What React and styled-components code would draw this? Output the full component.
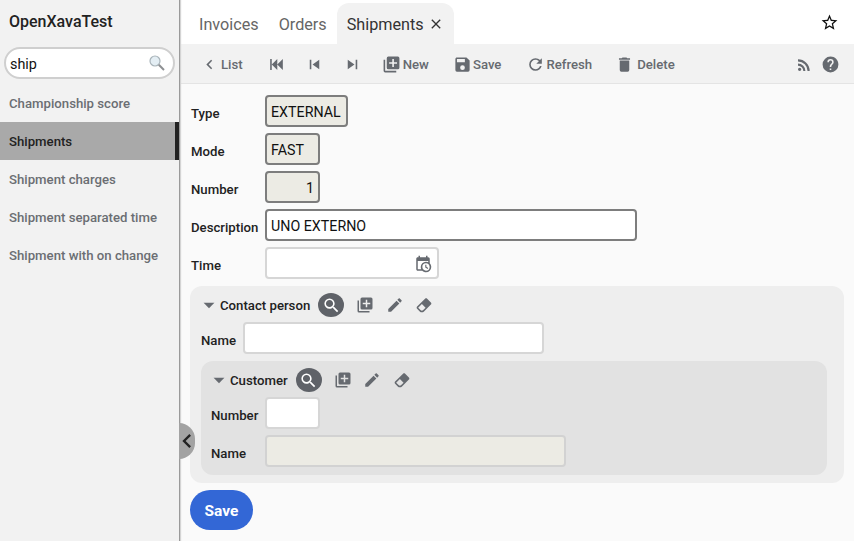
import styled, { createGlobalStyle } from 'styled-components';

const icons = {
  chevronLeft: 'M15.41,16.58L10.83,12L15.41,7.41L14,6L8,12L14,18L15.41,16.58Z',
  first: 'M20,5V19L13,12M6,5V19H4V5M13,5V19L6,12Z',
  prev: 'M6,18V6H8V18H6M9.5,12L18,6V18L9.5,12Z',
  next: 'M16,18H18V6H16M6,18L14.5,12L6,6V18Z',
  add: 'M19,11H15V15H13V11H9V9H13V5H15V9H19M20,2H8A2,2 0 0,0 6,4V16A2,2 0 0,0 8,18H20A2,2 0 0,0 22,16V4A2,2 0 0,0 20,2M4,6H2V20A2,2 0 0,0 4,22H18V20H4V6Z',
  save: 'M15,9H5V5H15M12,19A3,3 0 0,1 9,16A3,3 0 0,1 12,13A3,3 0 0,1 15,16A3,3 0 0,1 12,19M17,3H5C3.89,3 3,3.9 3,5V19A2,2 0 0,0 5,21H19A2,2 0 0,0 21,19V7L17,3Z',
  refresh: 'M17.65,6.35C16.2,4.9 14.21,4 12,4A8,8 0 0,0 4,12A8,8 0 0,0 12,20C15.73,20 18.84,17.45 19.73,14H17.65C16.83,16.33 14.61,18 12,18A6,6 0 0,1 6,12A6,6 0 0,1 12,6C13.66,6 15.14,6.69 16.22,7.78L13,11H20V4L17.65,6.35Z',
  trash: 'M19,4H15.5L14.5,3H9.5L8.5,4H5V6H19M6,19A2,2 0 0,0 8,21H16A2,2 0 0,0 18,19V7H6V19Z',
  rss: 'M6.18,15.64A2.18,2.18 0 0,1 8.36,17.82C8.36,19 7.38,20 6.18,20C5,20 4,19 4,17.82A2.18,2.18 0 0,1 6.18,15.64M4,4.44A15.56,15.56 0 0,1 19.56,20H16.73A12.73,12.73 0 0,0 4,7.27V4.44M4,10.1A9.9,9.9 0 0,1 13.9,20H11.07A7.07,7.07 0 0,0 4,12.93V10.1Z',
  help: 'M15.07,11.25L14.17,12.17C13.45,12.89 13,13.5 13,15H11V14.5C11,13.39 11.45,12.39 12.17,11.67L13.41,10.41C13.78,10.05 14,9.55 14,9C14,7.89 13.1,7 12,7A2,2 0 0,0 10,9H8A4,4 0 0,1 12,5A4,4 0 0,1 16,9C16,9.88 15.64,10.67 15.07,11.25M13,19H11V17H13M12,2A10,10 0 0,0 2,12A10,10 0 0,0 12,22A10,10 0 0,0 22,12C22,6.47 17.5,2 12,2Z',
  star: 'M12,15.39L8.24,17.66L9.23,13.38L5.91,10.5L10.29,10.13L12,6.09L13.71,10.13L18.09,10.5L14.77,13.38L15.76,17.66M22,9.24L14.81,8.63L12,2L9.19,8.62L2,9.24L7.45,13.97L5.82,21L12,17.27L18.18,21L16.54,13.97L22,9.24Z',
  magnify: 'M9.5,3A6.5,6.5 0 0,1 16,9.5C16,11.11 15.41,12.59 14.44,13.73L14.71,14H15.5L20.5,19L19,20.5L14,15.5V14.71L13.73,14.44C12.59,15.41 11.11,16 9.5,16A6.5,6.5 0 0,1 3,9.5A6.5,6.5 0 0,1 9.5,3M9.5,5C7,5 5,7 5,9.5C5,12 7,14 9.5,14C12,14 14,12 14,9.5C14,7 12,5 9.5,5Z',
  pencil: 'M20.71,7.04C21.1,6.65 21.1,6 20.71,5.63L18.37,3.29C18,2.9 17.35,2.9 16.96,3.29L15.12,5.12L18.87,8.87M3,17.25V21H6.75L17.81,9.93L14.06,6.18L3,17.25Z',
  eraser: 'M16.24,3.56L21.19,8.5C21.97,9.29 21.97,10.55 21.19,11.34L12,20.53C10.44,22.09 7.91,22.09 6.34,20.53L2.81,17C2.03,16.21 2.03,14.95 2.81,14.16L13.41,3.56C14.2,2.78 15.46,2.78 16.24,3.56M4.22,15.58L7.76,19.11C8.54,19.9 9.8,19.9 10.59,19.11L14.12,15.58L9.17,10.63L4.22,15.58Z',
  close: 'M19,6.41L17.59,5L12,10.59L6.41,5L5,6.41L10.59,12L5,17.59L6.41,19L12,13.41L17.59,19L19,17.59L13.41,12L19,6.41Z',
  menuDown: 'M7,10L12,15L17,10H7Z',
  calendarClock: 'M15,13H16.5V15.82L18.94,17.23L18.19,18.53L15,16.69V13M19,8H5V19H9.67C9.24,18.09 9,17.07 9,16A7,7 0 0,1 16,9C17.07,9 18.09,9.24 19,9.67V8M5,21C3.89,21 3,20.1 3,19V5C3,3.89 3.89,3 5,3H6V1H8V3H16V1H18V3H19A2,2 0 0,1 21,5V11.1C22.24,12.36 23,14.09 23,16A7,7 0 0,1 16,23C14.09,23 12.36,22.24 11.1,21H5M16,11.15A4.85,4.85 0 0,0 11.15,16C11.15,18.68 13.32,20.85 16,20.85A4.85,4.85 0 0,0 20.85,16C20.85,13.32 18.68,11.15 16,11.15Z',
};

const Icon = ({ name, size = 19, color = '#666a70' }) => (
  <svg width={size} height={size} viewBox="0 0 24 24" style={{ display: 'block', flex: 'none' }}>
    <path d={icons[name]} fill={color} />
  </svg>
);

const GlobalStyle = createGlobalStyle`
  html, body { margin: 0; padding: 0; }
  body { font-family: Roboto, "Liberation Sans", sans-serif; background: #fafafa; color: #1c1c1e; }
`;

const Page = styled.div`
  display: flex;
  width: 854px;
  height: 541px;
  overflow: hidden;
  position: relative;
`;

const Sidebar = styled.aside`
  width: 180px;
  flex: none;
  background: #f2f2f2;
  border-right: 1px solid #9a9a9a;
  box-shadow: 1px 0 1px #d4d4d4;
  box-sizing: border-box;
  z-index: 1;
`;

const AppName = styled.div`
  font-size: 16px;
  font-weight: 500;
  color: #222;
  padding: 12px 0 0 9px;
  height: 47px;
  line-height: 19px;
  box-sizing: border-box;
`;

const SearchBox = styled.div`
  display: flex;
  align-items: center;
  justify-content: space-between;
  width: 171px;
  height: 32px;
  margin-left: 4px;
  padding: 0 8px 0 4px;
  box-sizing: border-box;
  background: #fff;
  border: 2px solid #cfcfcf;
  border-radius: 16px;
  font-size: 14.4px;
  color: #111;
`;

const SearchText = styled.span`
  padding-top: 2px;
`;

const MenuList = styled.nav`
  margin-top: 5px;
  display: flex;
  flex-direction: column;
`;

const MenuItem = styled.div`
  height: 38px;
  line-height: 38px;
  padding: 1px 0 0 9px;
  box-sizing: border-box;
  font-size: 13.2px;
  font-weight: 500;
  color: ${(p) => (p.$active ? '#222' : '#6b6e73')};
  background: ${(p) => (p.$active ? '#a9a9a9' : 'transparent')};
  border-right: ${(p) => (p.$active ? '4px solid #222' : '4px solid transparent')};
`;

const Collapse = styled.div`
  position: absolute;
  left: 179px;
  top: 423px;
  width: 16px;
  height: 36px;
  padding-right: 1px;
  box-sizing: border-box;
  background: #a3a3a3;
  border-radius: 0 18px 18px 0;
  display: flex;
  align-items: center;
  justify-content: center;
  z-index: 2;
`;

const Main = styled.main`
  flex: 1;
  min-width: 0;
  display: flex;
  flex-direction: column;
`;

const TabBar = styled.div`
  height: 44px;
  background: #fff;
  display: flex;
  align-items: flex-end;
  padding-left: 9px;
`;

const Tab = styled.div`
  height: 41px;
  display: flex;
  align-items: center;
  gap: 4px;
  padding: 1px 10px 0;
  box-sizing: border-box;
  font-size: 16.2px;
  color: ${(p) => (p.$active ? '#333' : '#666')};
  background: ${(p) => (p.$active ? '#f2f2f2' : 'transparent')};
  border-radius: 12px 12px 0 0;
`;

const FavIcon = styled.div`
  margin-left: auto;
  margin-right: 15px;
  align-self: center;
`;

const Toolbar = styled.div`
  height: 40px;
  background: #f2f2f2;
  border-bottom: 1px solid #e4e4e4;
  box-sizing: border-box;
  display: flex;
  align-items: center;
  padding: 2px 14px 0 20px;
`;

const Action = styled.div`
  display: flex;
  align-items: center;
  gap: ${(p) => p.$gap ?? 1}px;
  margin-right: ${(p) => p.$right ?? 0}px;
  font-size: 13.2px;
  font-weight: 500;
  color: #666a70;
`;

const ToolEnd = styled.div`
  margin-left: auto;
  display: flex;
  align-items: center;
  gap: 8px;
`;

const Content = styled.div`
  flex: 1;
  padding: 8px 10px 0 10px;
  background: #fafafa;
`;

const TopFields = styled.div`
  padding-left: 1px;
`;

const Row = styled.div`
  display: flex;
  align-items: center;
  height: 38px;
`;

const Label = styled.label`
  width: ${(p) => p.$width ?? 74}px;
  flex: none;
  font-size: 13.2px;
  font-weight: 500;
  color: #222;
  padding-top: 4px;
`;

const Field = styled.div`
  width: ${(p) => p.$width}px;
  height: 32px;
  box-sizing: border-box;
  border: 2px solid ${(p) => p.$border ?? '#7d7d7d'};
  border-radius: 4px;
  background: ${(p) => p.$bg ?? '#fff'};
  padding: 2px 4px 0;
  font-size: 14.25px;
  color: #111;
  display: flex;
  align-items: center;
  justify-content: ${(p) => (p.$right ? 'flex-end' : 'space-between')};
`;

const CalendarSlot = styled.div`
  margin: -1px 1px 0 0;
`;

const Group = styled.section`
  margin-top: 4px;
  border-radius: 12px;
  background: ${(p) => (p.$inner ? '#e2e2e2' : '#eeeeee')};
  padding: ${(p) => (p.$inner ? '0 10px 5px 10px' : '0 17px 8px 11px')};
`;

const GroupHead = styled.div`
  display: flex;
  align-items: center;
  height: 33px;
  padding-top: 5px;
  box-sizing: border-box;
  font-size: 13.2px;
  font-weight: 500;
  color: #222;
`;

const Caret = styled.div`
  margin-left: -5px;
`;

const GroupTitle = styled.span`
  margin: 0 8px 0 -2px;
`;

const RoundSearch = styled.div`
  width: 26px;
  height: 24px;
  border-radius: 50%;
  background: #5f6268;
  display: flex;
  align-items: center;
  justify-content: center;
  margin-right: 12px;
`;

const HeadIcons = styled.div`
  display: flex;
  align-items: center;
  gap: 11.5px;
`;

const SaveButton = styled.button`
  display: block;
  margin-top: 7px;
  width: 63px;
  height: 40px;
  border: 0;
  border-radius: 20px;
  background: #3367d6;
  color: #fff;
  font-family: inherit;
  font-size: 15.5px;
  font-weight: 700;
  padding: 2px 0 0;
`;

const SearchGlass = () => (
  <svg width="16" height="16" viewBox="0 0 16 16" style={{ display: 'block' }}>
    <circle cx="6" cy="6" r="5" fill="#e4eef4" stroke="#a9b4ba" strokeWidth="1.2" />
    <path d="M9.8 9.8L15 15" stroke="#8d8f92" strokeWidth="2" />
  </svg>
);

const PersonHead = ({ title }) => (
  <GroupHead>
    <Caret><Icon name="menuDown" size={26} /></Caret>
    <GroupTitle>{title}</GroupTitle>
    <RoundSearch>
      <Icon name="magnify" size={19} color="#fff" />
    </RoundSearch>
    <HeadIcons>
      <Icon name="add" size={18} />
      <Icon name="pencil" size={18} />
      <Icon name="eraser" size={18} />
    </HeadIcons>
  </GroupHead>
);

const menu = ['Championship score', 'Shipments', 'Shipment charges', 'Shipment separated time', 'Shipment with on change'];

const App = () => (
  <Page>
    <GlobalStyle />
    <Sidebar>
      <AppName>OpenXavaTest</AppName>
      <SearchBox>
        <SearchText>ship</SearchText>
        <SearchGlass />
      </SearchBox>
      <MenuList>
        {menu.map((m) => (
          <MenuItem key={m} $active={m === 'Shipments'}>{m}</MenuItem>
        ))}
      </MenuList>
    </Sidebar>
    <Collapse>
      <Icon name="chevronLeft" size={28} color="#222" />
    </Collapse>
    <Main>
      <TabBar>
        <Tab>Invoices</Tab>
        <Tab>Orders</Tab>
        <Tab $active>
          Shipments
          <Icon name="close" size={16} color="#333" />
        </Tab>
        <FavIcon>
          <Icon name="star" size={19} color="#111" />
        </FavIcon>
      </TabBar>
      <Toolbar>
        <Action $right={24} $gap={2}><Icon name="chevronLeft" />List</Action>
        <Action $right={19}><Icon name="first" /></Action>
        <Action $right={19}><Icon name="prev" /></Action>
        <Action $right={20}><Icon name="next" /></Action>
        <Action $right={24} $gap={2}><Icon name="add" />New</Action>
        <Action $right={25}><Icon name="save" />Save</Action>
        <Action $right={23} $gap={1}><Icon name="refresh" />Refresh</Action>
        <Action $gap={3}><Icon name="trash" />Delete</Action>
        <ToolEnd>
          <Icon name="rss" size={18} />
          <Icon name="help" />
        </ToolEnd>
      </Toolbar>
      <Content>
        <TopFields>
          <Row><Label>Type</Label><Field $width={83} $bg="#ecebe4">EXTERNAL</Field></Row>
          <Row><Label>Mode</Label><Field $width={55} $bg="#ecebe4">FAST</Field></Row>
          <Row><Label>Number</Label><Field $width={55} $bg="#ecebe4" $right>1</Field></Row>
          <Row><Label>Description</Label><Field $width={372}>UNO EXTERNO</Field></Row>
          <Row>
            <Label>Time</Label>
            <Field $width={174} $border="#d6d6d6">
              <span />
              <CalendarSlot><Icon name="calendarClock" size={18} /></CalendarSlot>
            </Field>
          </Row>
        </TopFields>
        <Group>
          <PersonHead title="Contact person" />
          <Row>
            <Label $width={42}>Name</Label>
            <Field $width={301} $border="#d6d6d6" />
          </Row>
          <Group $inner>
            <PersonHead title="Customer" />
            <Row>
              <Label $width={54}>Number</Label>
              <Field $width={55} $border="#d6d6d6" />
            </Row>
            <Row>
              <Label $width={54}>Name</Label>
              <Field $width={301} $border="#d2d2d2" $bg="#ecebe4" />
            </Row>
          </Group>
        </Group>
        <SaveButton>Save</SaveButton>
      </Content>
    </Main>
  </Page>
);

export default App;
